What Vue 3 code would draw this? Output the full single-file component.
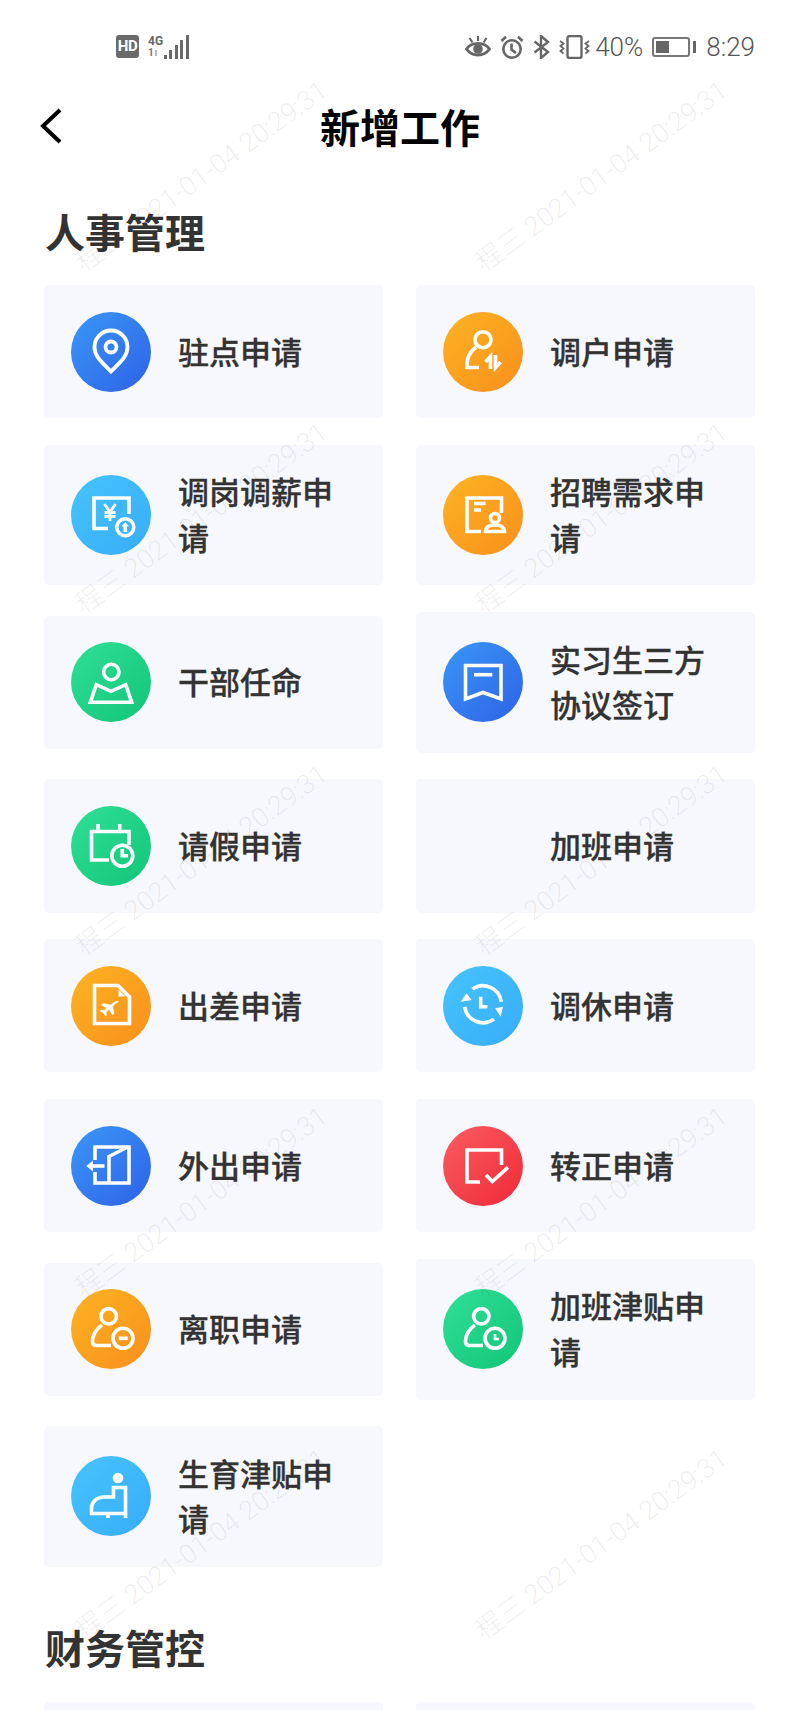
<script setup>
const hrItems = [
  { name: '驻点申请', icon: 'pin', color: 'blue' },
  { name: '调户申请', icon: 'transfer', color: 'orange' },
  { name: '调岗调薪申请', icon: 'salary', color: 'sky' },
  { name: '招聘需求申请', icon: 'hire', color: 'orange' },
  { name: '干部任命', icon: 'map', color: 'green' },
  { name: '实习生三方协议签订', icon: 'book', color: 'blue' },
  { name: '请假申请', icon: 'calendar', color: 'green' },
  { name: '加班申请', icon: '', color: '' },
  { name: '出差申请', icon: 'trip', color: 'orange' },
  { name: '调休申请', icon: 'rest', color: 'sky' },
  { name: '外出申请', icon: 'door', color: 'blue' },
  { name: '转正申请', icon: 'check', color: 'red' },
  { name: '离职申请', icon: 'leave', color: 'orange' },
  { name: '加班津贴申请', icon: 'overtime', color: 'green' },
  { name: '生育津贴申请', icon: 'seat', color: 'sky' },
];

const marks = Array.from({ length: 10 }, (_, i) => i);
</script>

<template>
  <div class="page">
    <div class="status">
      <div class="status-left">
        <span class="hd">HD</span>
        <div class="net">
          <span>4G</span>
          <span class="net-low">1<i></i></span>
        </div>
        <div class="bars">
          <i style="height: 4px"></i>
          <i style="height: 9px"></i>
          <i style="height: 14px"></i>
          <i style="height: 19px"></i>
          <i style="height: 24px"></i>
        </div>
      </div>
      <div class="status-right">
        <svg width="26" height="24" viewBox="0 0 26 24" fill="none" stroke="#666" stroke-width="2.8">
          <path d="M1.500 14C7 6.500 19 6.500 24.500 14C19 22 7 22 1.500 14Z" />
          <circle cx="13" cy="14" r="4.800" fill="#666" stroke="none" />
          <path d="M13 1V6M4.500 3L7.500 7.500M21.500 3L18.500 7.500" stroke-width="2.200" />
        </svg>
        <svg width="24" height="24" viewBox="0 0 24 24" fill="none" stroke="#666" stroke-width="2.600">
          <circle cx="12" cy="14" r="8.700" />
          <path d="M11.500 8.500V14.500L16 18M1.500 6L6 1.800M22.500 6L18 1.800" />
        </svg>
        <svg width="17" height="24" viewBox="0 0 17 24" fill="none" stroke="#666" stroke-width="2.400">
          <path d="M1.500 6.500L15 17L8 23V1L15 7L1.500 17.500" />
        </svg>
        <svg width="31" height="24" viewBox="0 0 31 24" fill="none" stroke="#666" stroke-width="2.400">
          <rect x="8.500" y="1" width="14" height="22" rx="2" />
          <path d="M1 6L4.500 8.500L1.500 11L4.500 13.500L1.500 16L4.500 18.500M30 6L26.500 8.500L29.500 11L26.500 13.500L29.500 16L26.500 18.500" stroke-width="1.800" />
        </svg>
        <span class="status-text pct">40%</span>
        <div class="battery"><i></i></div>
        <span class="status-text">8:29</span>
      </div>
    </div>

    <div class="nav">
      <svg class="back" width="22" height="36" viewBox="0 0 22 36" fill="none" stroke="#000" stroke-width="4">
        <path d="M20 2L3 18L20 34" />
      </svg>
      <h1>新增工作</h1>
    </div>

    <h2>人事管理</h2>
    <div class="grid">
      <div v-for="item in hrItems" :key="item.name" class="card">
        <div class="icon" :class="item.color">
          <svg v-if="item.icon" width="80" height="80" viewBox="0 0 80 80" fill="none" stroke="#fff" stroke-width="3.600">
            <template v-if="item.icon === 'pin'">
              <path d="M40 59.500C32 51 23.500 45 23.500 35A16.500 16.500 0 0 1 56.500 35C56.500 45 48 51 40 59.500Z" stroke-width="3.800" />
              <circle cx="40" cy="35" r="5.500" stroke-width="3.800" />
            </template>
            <template v-else-if="item.icon === 'transfer'">
              <circle cx="40" cy="27.700" r="8" />
              <path d="M33 35C27 40 24 46 24 52V55.500H36" />
              <path d="M47.500 57V44.500L42.500 50M52.500 43V55.500L57.500 50" />
            </template>
            <template v-else-if="item.icon === 'salary'">
              <path d="M58 39V23H23V53.500H37" />
              <path d="M33.500 29L39 37L44.500 29M39 37V46M33.500 37.500H44.500M33.500 41.500H44.500" stroke-width="2.800" />
              <circle cx="54.300" cy="52.300" r="8.500" />
              <path d="M54.300 57V50.500" />
              <path d="M50.500 51.500L54.300 47L58 51.500Z" fill="#fff" stroke="none" />
            </template>
            <template v-else-if="item.icon === 'hire'">
              <path d="M58.500 38V23H24V56.500H38" />
              <path d="M31 28.500H42.500M31 35H38" />
              <circle cx="52" cy="43" r="4.500" />
              <path d="M42.500 56.500C42.500 51 47 50 52 50S61 51 61.500 56.500Z" />
            </template>
            <template v-else-if="item.icon === 'map'">
              <circle cx="40.300" cy="30" r="7.700" />
              <path d="M25.300 42.700L40 49.300L54.700 42.700L60.700 60.300H19.300Z" />
            </template>
            <template v-else-if="item.icon === 'book'">
              <path d="M22.500 23.500H58V57L40 50.500L22.500 57Z" />
              <path d="M31 32.700H49.300" />
            </template>
            <template v-else-if="item.icon === 'calendar'">
              <path d="M58 39V25.500H20.500V54H38" />
              <path d="M27 18V25.500M48.700 18V25.500" />
              <circle cx="51.300" cy="49.700" r="10.500" />
              <path d="M51.300 43V49.700H57" />
            </template>
            <template v-else-if="item.icon === 'trip'">
              <path d="M23.500 19.500H47L58.500 31V57.500H23.500Z" />
              <path d="M47.500 23.500L54.500 30.500H47.500Z" fill="#fff" stroke="none" />
              <path d="M47.500 35.500C46 35 44.500 35.500 43 36.500L39.500 39L32.500 37.500L30.500 39L36 42L33 44.500L30 44L29 45L32.500 47L34.500 50L35.500 49L35.200 46.300L38 43.500L41.500 49L43 47.500L41.700 40.500L44.500 37.500C45.500 36.500 47.500 36 47.500 35.500Z" fill="#fff" stroke="#fff" stroke-width="0.500" />
            </template>
            <template v-else-if="item.icon === 'rest'">
              <path d="M29.400 23.100A18.500 18.500 0 0 1 58.300 35.700" />
              <path d="M51 53.100A18.500 18.500 0 0 1 21.700 40.700" />
              <path d="M57.700 50.700L52 42.300L60 40.700Z" fill="#fff" stroke="none" />
              <path d="M23.400 27.300L17.700 35.700L28.700 34Z" fill="#fff" stroke="none" />
              <path d="M37.700 30.700V40.700H44.400" />
            </template>
            <template v-else-if="item.icon === 'door'">
              <path d="M24 34V21H58V57H24V46" />
              <path d="M38 57V30.500L56.500 21" />
              <path d="M21 40H33.500" />
              <path d="M15.300 40L22 34.500V45.500Z" fill="#fff" stroke="none" />
            </template>
            <template v-else-if="item.icon === 'check'">
              <path d="M58.500 39V24H24V56H37" />
              <path d="M43 49L49.300 55.500L65 41.300" />
            </template>
            <template v-else-if="item.icon === 'leave'">
              <circle cx="37.700" cy="27.300" r="7.700" />
              <path d="M31 36C25 40 21 47 21.500 53C21.500 56 23.500 56.500 26 56.500H40" />
              <circle cx="52" cy="49.300" r="10" />
              <path d="M47.700 49.300H56.700" />
            </template>
            <template v-else-if="item.icon === 'overtime'">
              <circle cx="38.300" cy="27.300" r="7.700" />
              <path d="M32 36C26 40 22 47 22.500 53C22.500 56 24.500 56.500 27 56.500H40" />
              <circle cx="52" cy="49.300" r="10" />
              <path d="M52 45V50H56" stroke-width="2.600" />
            </template>
            <template v-else-if="item.icon === 'seat'">
              <circle cx="47" cy="22" r="5.300" fill="#fff" stroke="none" />
              <path d="M42.500 31.500V41H33C26 41 20.500 46 20.500 52V57.500H54.500V31.500H42.500Z" />
              <path d="M37 57.500V62M54.500 57.500V62" />
            </template>
          </svg>
        </div>
        <div class="name">{{ item.name }}</div>
      </div>
    </div>

    <h2 class="next">财务管控</h2>
    <div class="grid">
      <div class="card"></div>
      <div class="card"></div>
    </div>

    <div class="marks">
      <div v-for="m in marks" :key="m" class="mark"><span>程三 2021-01-04 20:29:31</span></div>
    </div>
  </div>
</template>

<style scoped>
.page {
  position: relative;
  width: 800px;
  height: 1710px;
  overflow: hidden;
  background: #fff;
  color: #333;
  font-family: "Noto Sans CJK SC", Roboto, sans-serif;
}

.status {
  height: 90px;
  display: flex;
  align-items: center;
  justify-content: space-between;
  padding: 3px 45px 0 116px;
  box-sizing: border-box;
}

.status-left {
  display: flex;
  align-items: center;
  font-family: Roboto, sans-serif;
  color: #666;
}

.hd {
  width: 23px;
  height: 23px;
  border-radius: 3px;
  background: #6a6a6a;
  color: #fff;
  font-size: 15px;
  font-weight: 700;
  line-height: 23px;
  text-align: center;
  letter-spacing: -0.5px;
}

.net {
  margin-left: 9px;
  width: 15px;
  display: flex;
  flex-direction: column;
  font-size: 12px;
  font-weight: 700;
  line-height: 12px;
}

.net-low {
  font-size: 10px;
  display: flex;
  align-items: center;
  color: #777;
}

.net-low i {
  width: 2px;
  height: 6px;
  margin-left: 1px;
  background: #bbb;
}

.bars {
  height: 24px;
  margin-left: 1px;
  display: flex;
  align-items: flex-end;
  gap: 2.400px;
}

.bars i {
  width: 3px;
  background: #6a6a6a;
}

.status-right {
  display: flex;
  align-items: center;
  gap: 9px;
}

.status-text {
  font-family: Roboto, sans-serif;
  font-weight: 300;
  font-size: 26px;
  line-height: 30px;
  color: #555;
}

.pct {
  margin-left: -4px;
}

.battery {
  position: relative;
  width: 38px;
  height: 20px;
  box-sizing: border-box;
  border: 2px solid #777;
  border-radius: 3px;
  margin-right: 7px;
  padding: 2px;
}

.battery::after {
  content: "";
  position: absolute;
  right: -8px;
  top: 2px;
  width: 3.500px;
  height: 12px;
  background: #666;
}

.battery i {
  display: block;
  width: 13px;
  height: 100%;
  background: #666;
}

.nav {
  position: relative;
  height: 78px;
  display: flex;
  align-items: center;
  justify-content: center;
}

.back {
  position: absolute;
  left: 40px;
  top: 18px;
}

h1 {
  margin: 0 0 6px;
  font-size: 40px;
  font-weight: 700;
  line-height: 72px;
  color: #000;
}

h2 {
  margin: 0;
  padding: 33px 0 24px 45px;
  font-size: 40px;
  font-weight: 700;
  line-height: 60px;
  color: #333;
}

h2.next {
  padding-top: 50px;
  padding-bottom: 25px;
}

.grid {
  margin-left: 44px;
  display: grid;
  grid-template-columns: 339px 339px;
  column-gap: 33px;
  row-gap: 26.600px;
  align-items: center;
}

.card {
  min-height: 133.300px;
  box-sizing: border-box;
  padding: 0 27px;
  display: flex;
  align-items: center;
  gap: 27px;
  border-radius: 5px;
  background: #f7f8fd;
}

.icon {
  flex: none;
  width: 80px;
  height: 80px;
  border-radius: 50%;
}

.icon svg {
  display: block;
}

.blue {
  background: linear-gradient(135deg, #3a97f8, #2e62e6);
}

.sky {
  background: linear-gradient(135deg, #46c4fc, #37acf9);
}

.orange {
  background: linear-gradient(135deg, #fdb322, #f98f1c);
}

.green {
  background: linear-gradient(135deg, #2fe096, #12c578);
}

.red {
  background: linear-gradient(135deg, #fb5c60, #ef2a38);
}

.name {
  padding: 23.500px 0 26.500px;
  font-size: 31px;
  font-weight: 500;
  line-height: 45.300px;
  color: #333;
  -webkit-text-stroke: 0.3px #333;
}

.marks {
  position: absolute;
  left: 0;
  top: 3px;
  display: grid;
  grid-template-columns: 400px 400px;
  grid-auto-rows: 342px;
  pointer-events: none;
}

.mark {
  display: flex;
  align-items: center;
  justify-content: center;
}

.mark span {
  display: block;
  transform: rotate(-36deg);
  white-space: nowrap;
  font-family: Roboto, "Noto Sans CJK SC", sans-serif;
  font-weight: 300;
  font-size: 27px;
  color: rgba(0, 0, 0, 0.07);
}
</style>
